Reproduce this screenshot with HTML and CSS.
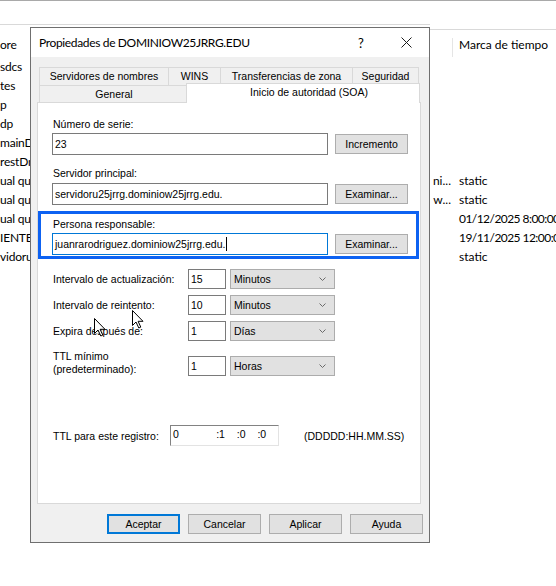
FILE: index.html
```html
<!DOCTYPE html>
<html lang="es">
<head>
<meta charset="utf-8">
<title>Propiedades de DOMINIOW25JRRG.EDU</title>
<link rel="stylesheet" href="styles.css">
</head>
<body>
<div class="desktop">
  <div class="bg">
    <div class="strip"><div class="strip-l"></div><div class="strip-r"></div></div>
    <div class="list">
      <div class="row head"><div class="name">ore</div><div class="data"></div><div class="stamp"><div class="sep"></div><span class="head-text">Marca de tiempo</span></div></div>
      <div class="row"><div class="name">sdcs</div><div class="data"></div><div class="stamp"></div></div>
      <div class="row"><div class="name">tes</div><div class="data"></div><div class="stamp"></div></div>
      <div class="row"><div class="name">p</div><div class="data"></div><div class="stamp"></div></div>
      <div class="row"><div class="name">dp</div><div class="data"></div><div class="stamp"></div></div>
      <div class="row"><div class="name">mainD</div><div class="data"></div><div class="stamp"></div></div>
      <div class="row"><div class="name">restDn</div><div class="data"></div><div class="stamp"></div></div>
      <div class="row"><div class="name">ual qu</div><div class="data">ni...</div><div class="stamp">static</div></div>
      <div class="row"><div class="name">ual qu</div><div class="data">w...</div><div class="stamp">static</div></div>
      <div class="row"><div class="name">ual qu</div><div class="data"></div><div class="stamp date">01/12/2025 8:00:00</div></div>
      <div class="row"><div class="name">IENTEW</div><div class="data"></div><div class="stamp date">19/11/2025 12:00:0</div></div>
      <div class="row"><div class="name">vidoru</div><div class="data"></div><div class="stamp">static</div></div>
    </div>
  </div>

  <div class="dialog">
    <div class="titlebar">
      <span class="title">Propiedades de DOMINIOW25JRRG.EDU</span>
      <span class="tb-btn help">?</span>
      <span class="tb-btn close"><svg width="11" height="11" viewBox="0 0 11 11"><path d="M0.5 0.5L10.5 10.5M10.5 0.5L0.5 10.5" stroke="#1a1a1a" stroke-width="1" fill="none"/></svg></span>
    </div>
    <div class="body">
      <div class="tabs">
        <div class="tabrow">
          <div class="tab t1">Servidores de nombres</div>
          <div class="tab t2">WINS</div>
          <div class="tab t3">Transferencias de zona</div>
          <div class="tab t4">Seguridad</div>
        </div>
        <div class="tabrow front">
          <div class="tab t5">General</div>
          <div class="tab sel">Inicio de autoridad (SOA)</div>
        </div>
      </div>
      <div class="panel">
        <div class="section">
          <div class="lbl">Número de serie:</div>
          <div class="field-row">
            <div class="input wide">23</div>
            <div class="btn">Incremento</div>
          </div>
        </div>
        <div class="section second">
          <div class="lbl">Servidor principal:</div>
          <div class="field-row">
            <div class="input wide">servidoru25jrrg.dominiow25jrrg.edu.</div>
            <div class="btn">Examinar...</div>
          </div>
        </div>
        <div class="highlight">
          <div class="lbl">Persona responsable:</div>
          <div class="field-row">
            <div class="input wide focus">juanrarodriguez.dominiow25jrrg.edu.<span class="caret"></span></div>
            <div class="btn">Examinar...</div>
          </div>
        </div>
        <div class="intervals">
          <div class="irow">
            <div class="ilbl">Intervalo de actualización:</div>
            <div class="num">15</div>
            <div class="select"><span>Minutos</span><svg width="7" height="4" viewBox="0 0 7 4"><path d="M0.5 0.5L3.5 3.5L6.5 0.5" stroke="#6a6a6a" fill="none"/></svg></div>
          </div>
          <div class="irow">
            <div class="ilbl">Intervalo de reintento:</div>
            <div class="num">10</div>
            <div class="select"><span>Minutos</span><svg width="7" height="4" viewBox="0 0 7 4"><path d="M0.5 0.5L3.5 3.5L6.5 0.5" stroke="#6a6a6a" fill="none"/></svg></div>
          </div>
          <div class="irow">
            <div class="ilbl">Expira después de:</div>
            <div class="num">1</div>
            <div class="select"><span>Días</span><svg width="7" height="4" viewBox="0 0 7 4"><path d="M0.5 0.5L3.5 3.5L6.5 0.5" stroke="#6a6a6a" fill="none"/></svg></div>
          </div>
          <div class="irow tall">
            <div class="ilbl">TTL mínimo<br>(predeterminado):</div>
            <div class="num">1</div>
            <div class="select"><span>Horas</span><svg width="7" height="4" viewBox="0 0 7 4"><path d="M0.5 0.5L3.5 3.5L6.5 0.5" stroke="#6a6a6a" fill="none"/></svg></div>
          </div>
        </div>
        <div class="ttl-row">
          <div class="ttl-lbl">TTL para este registro:</div>
          <div class="ttl-input"><span class="tp d">0</span><span class="tp">:1</span><span class="tp">:0</span><span class="tp">:0</span></div>
          <div class="ttl-fmt">(DDDDD:HH.MM.SS)</div>
        </div>
      </div>
      <div class="buttons">
        <div class="btn default">Aceptar</div>
        <div class="btn">Cancelar</div>
        <div class="btn">Aplicar</div>
        <div class="btn">Ayuda</div>
      </div>
    </div>
  </div>

  <svg class="cursor c1" width="12" height="19" viewBox="0 0 12 19"><path d="M0.5 0.5L0.5 15.5L4 12L6.8 18L8.8 17.1L6.1 11.3L11 11.3Z" fill="#fff" stroke="#000" stroke-width="1" stroke-linejoin="miter"/></svg>
  <svg class="cursor c2" width="12" height="19" viewBox="0 0 12 19"><path d="M0.5 0.5L0.5 15.5L4 12L6.8 18L8.8 17.1L6.1 11.3L11 11.3Z" fill="#fff" stroke="#000" stroke-width="1" stroke-linejoin="miter"/></svg>
</div>
</body>
</html>
```
FILE: styles.css
```css
html, body {
  margin: 0;
  padding: 0;
}
body {
  width: 556px;
  height: 586px;
  overflow: hidden;
  background: #fff;
  font-family: "Lato", "Noto Sans", sans-serif;
  color: #000;
}
.desktop {
  position: relative;
  width: 556px;
  height: 586px;
  overflow: hidden;
}

/* background window */
.bg {
  border-top: 1px solid #a9a9a9;
}
.strip {
  display: flex;
  align-items: flex-start;
}
.strip-l {
  width: 430px;
  height: 23px;
  border-bottom: 1px solid #d9d9d9;
}
.strip-r {
  flex: 1;
  height: 28px;
  border-bottom: 1px solid #d9d9d9;
}
.list {
  font-size: 12px;
}
.row {
  display: grid;
  grid-template-columns: 30px 1fr 104px;
  height: 19px;
  line-height: 19px;
  align-items: center;
  white-space: nowrap;
}
.row.head {
  height: 27px;
}
.name {
  overflow: hidden;
  letter-spacing: -0.2px;
}
.data {
  justify-self: end;
  width: 24px;
  overflow: hidden;
  display: flex;
  justify-content: flex-end;
  padding-right: 1px;
  box-sizing: border-box;
}
.stamp {
  padding-left: 7px;
  overflow: hidden;
}
.stamp.date {
  letter-spacing: -0.55px;
}
.head .stamp {
  display: flex;
  align-items: flex-end;
  height: 27px;
  padding-left: 0;
}
.sep {
  width: 1px;
  height: 19px;
  background: #e5e5e5;
}
.head-text {
  margin-left: 6px;
  align-self: center;
  padding-top: 2px;
}
.head .name {
  padding-top: 2px;
}

/* dialog */
.dialog {
  position: absolute;
  left: 30px;
  top: 27px;
  z-index: 2;
  width: 400px;
  height: 516px;
  box-sizing: border-box;
  border: 1px solid #6f6f6f;
  background: #f0f0f0;
  display: flex;
  flex-direction: column;
  font-family: "Liberation Sans", Arial, sans-serif;
  font-size: 10.5px;
}
.titlebar {
  height: 29px;
  background: #fff;
  display: flex;
  align-items: center;
  padding-left: 8px;
  font-family: "Lato", "Noto Sans", sans-serif;
  font-size: 12px;
}
.title {
  flex: 1;
  letter-spacing: -0.35px;
}
.tb-btn {
  display: flex;
  align-items: center;
  justify-content: center;
  height: 29px;
}
.help {
  width: 44px;
  font-size: 13px;
}
.close {
  width: 46px;
}
.body {
  padding: 10px 6px 0 6px;
}
.tabs {
  margin-left: 2px;
}
.tabrow {
  display: flex;
  height: 18px;
}
.tabrow.front {
  height: 17px;
}
.tab {
  box-sizing: border-box;
  border: 1px solid #d9d9d9;
  border-bottom: none;
  border-right: none;
  background: #f0f0f0;
  text-align: center;
  line-height: 17px;
  white-space: nowrap;
}
.t1 { width: 129px; }
.t2 { width: 52px; }
.t3 { width: 132px; }
.t4 { width: 67px; border-right: 1px solid #d9d9d9; }
.t5 { width: 149px; height: 17px; }
.tab.sel {
  position: relative;
  z-index: 1;
  width: 234px;
  height: 20px;
  margin-left: -2px;
  margin-top: -2px;
  background: #fff;
  border-right: 1px solid #d9d9d9;
  padding-left: 12px;
}
.panel {
  box-sizing: border-box;
  width: 384px;
  height: 402px;
  background: #fff;
  border: 1px solid #d9d9d9;
  padding-top: 15px;
}
.section {
  padding-left: 14px;
}
.section.second {
  margin-top: 12px;
}
.lbl {
  line-height: 13px;
  height: 13px;
  padding-left: 1px;
}
.field-row {
  display: flex;
  align-items: center;
  margin-top: 2px;
  height: 22px;
}
.section.second .field-row {
  margin-top: 3px;
}
.input {
  box-sizing: border-box;
  height: 22px;
  border: 1px solid #7a7a7a;
  background: #fff;
  padding: 0 2px;
  line-height: 20px;
  white-space: nowrap;
  overflow: hidden;
}
.input.wide {
  width: 276px;
}
.input.focus {
  border-color: #0078d7;
}
.caret {
  display: inline-block;
  width: 1px;
  height: 14px;
  background: #000;
  vertical-align: middle;
  margin-left: 1px;
  margin-top: -2px;
}
.btn {
  box-sizing: border-box;
  width: 73px;
  height: 20px;
  border: 1px solid #adadad;
  background: #e1e1e1;
  text-align: center;
  line-height: 18px;
}
.field-row .btn {
  margin-left: 7px;
}
.btn.default {
  border: 2px solid #0078d7;
  line-height: 16px;
}
.highlight {
  margin: 6px 1px 0 0;
  border: 3px solid #0d62f2;
  padding: 4px 0 1px 11px;
}
.intervals {
  margin-top: 10px;
  padding-left: 14px;
}
.irow {
  display: flex;
  align-items: center;
  height: 20px;
  margin-bottom: 6px;
}
.irow.tall {
  height: 26px;
  align-items: flex-end;
  margin-top: 9px;
  margin-bottom: 0;
}
.ilbl {
  width: 136px;
  line-height: 13px;
  padding-left: 1px;
  box-sizing: border-box;
}
.num {
  box-sizing: border-box;
  width: 38px;
  height: 20px;
  border: 1px solid #7a7a7a;
  background: #fff;
  padding-left: 2px;
  line-height: 18px;
}
.select {
  box-sizing: border-box;
  width: 105px;
  height: 20px;
  margin-left: 4px;
  border: 1px solid #acacac;
  background: #e1e1e1;
  display: flex;
  align-items: center;
  justify-content: space-between;
  padding: 0 8px 0 3px;
}
.ttl-row {
  display: flex;
  align-items: center;
  margin-top: 49px;
  padding-left: 14px;
  height: 21px;
}
.ttl-lbl {
  width: 118px;
  padding-left: 1px;
  box-sizing: border-box;
}
.ttl-input {
  box-sizing: border-box;
  width: 109px;
  height: 21px;
  border: 1px solid;
  border-color: #828282 #e3e3e3 #e3e3e3 #828282;
  background: #fff;
  display: flex;
  padding-left: 2px;
  line-height: 17px;
}
.tp {
  width: 21px;
}
.tp.d {
  width: 44px;
}
.ttl-fmt {
  margin-left: 25px;
}
.buttons {
  display: flex;
  justify-content: flex-end;
  gap: 8px;
  margin-top: 10px;
}

/* mouse pointers over the dialog */
.cursor {
  position: absolute;
  z-index: 3;
}
.c1 { left: 94px; top: 318px; }
.c2 { left: 132px; top: 310px; }
```
